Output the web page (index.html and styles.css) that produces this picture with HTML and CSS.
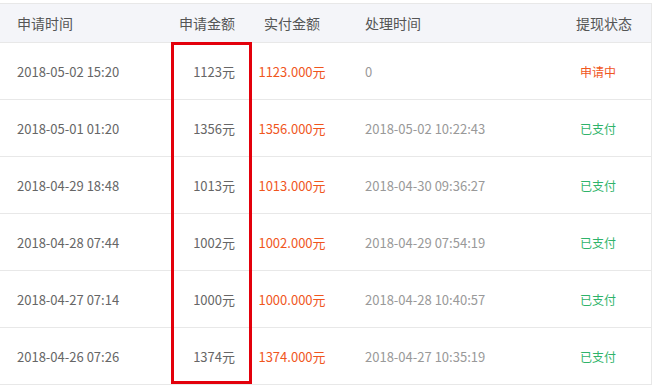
FILE: index.html
```html
<!DOCTYPE html>
<html lang="zh">
<head>
<meta charset="utf-8">
<link rel="stylesheet" href="styles.css">
</head>
<body>
<div class="table">
  <div class="row head">
    <div class="c1">申请时间</div>
    <div class="c2">申请金额</div>
    <div class="c3">实付金额</div>
    <div class="c4">处理时间</div>
    <div class="c5 h5">提现状态</div>
  </div>
  <div class="row">
    <div class="c1">2018-05-02 15:20</div>
    <div class="c2">1123元</div>
    <div class="c3 pay">1123.000元</div>
    <div class="c4 muted">0</div>
    <div class="c5 pending">申请中</div>
  </div>
  <div class="row">
    <div class="c1">2018-05-01 01:20</div>
    <div class="c2">1356元</div>
    <div class="c3 pay">1356.000元</div>
    <div class="c4 muted">2018-05-02 10:22:43</div>
    <div class="c5 paid">已支付</div>
  </div>
  <div class="row">
    <div class="c1">2018-04-29 18:48</div>
    <div class="c2">1013元</div>
    <div class="c3 pay">1013.000元</div>
    <div class="c4 muted">2018-04-30 09:36:27</div>
    <div class="c5 paid">已支付</div>
  </div>
  <div class="row">
    <div class="c1">2018-04-28 07:44</div>
    <div class="c2">1002元</div>
    <div class="c3 pay">1002.000元</div>
    <div class="c4 muted">2018-04-29 07:54:19</div>
    <div class="c5 paid">已支付</div>
  </div>
  <div class="row">
    <div class="c1">2018-04-27 07:14</div>
    <div class="c2">1000元</div>
    <div class="c3 pay">1000.000元</div>
    <div class="c4 muted">2018-04-28 10:40:57</div>
    <div class="c5 paid">已支付</div>
  </div>
  <div class="row">
    <div class="c1">2018-04-26 07:26</div>
    <div class="c2">1374元</div>
    <div class="c3 pay">1374.000元</div>
    <div class="c4 muted">2018-04-27 10:35:19</div>
    <div class="c5 paid">已支付</div>
  </div>
  <div class="highlight"></div>
</div>
</body>
</html>
```
FILE: styles.css
```css
html, body {
  margin: 0;
  padding: 0;
  background: #fff;
}
body {
  font-family: "Noto Sans CJK SC", "Noto Sans", sans-serif;
  font-size: 13px;
  color: #666;
}
.table {
  position: relative;
  width: 651px;
  margin-top: 3px;
  border-top: 1px solid #e8e8e8;
  border-right: 1px solid #e8e8e8;
}
.row {
  display: grid;
  grid-template-columns: 171px 81px 80px 228px 91px;
  height: 56px;
  align-items: center;
  border-bottom: 1px solid #e8e8e8;
}
.row.head {
  height: 38px;
  background: #f4f5f9;
  color: #555;
  font-size: 14px;
}
.c1 { padding-left: 17px; }
.c2 { text-align: right; padding-right: 17px; }
.c3 { text-align: center; }
.c4 { padding-left: 33px; }
.c5 { padding-left: 20px; font-size: 12px; }
.head .c5 { padding-left: 16px; font-size: 14px; }
.pay { color: #f0561d; }
.muted { color: #999; }
.pending { color: #f0561d; }
.paid { color: #2fb36a; }
.highlight {
  position: absolute;
  left: 171px;
  top: 38px;
  width: 75px;
  height: 336px;
  border: 3px solid #e3000b;
}
```
